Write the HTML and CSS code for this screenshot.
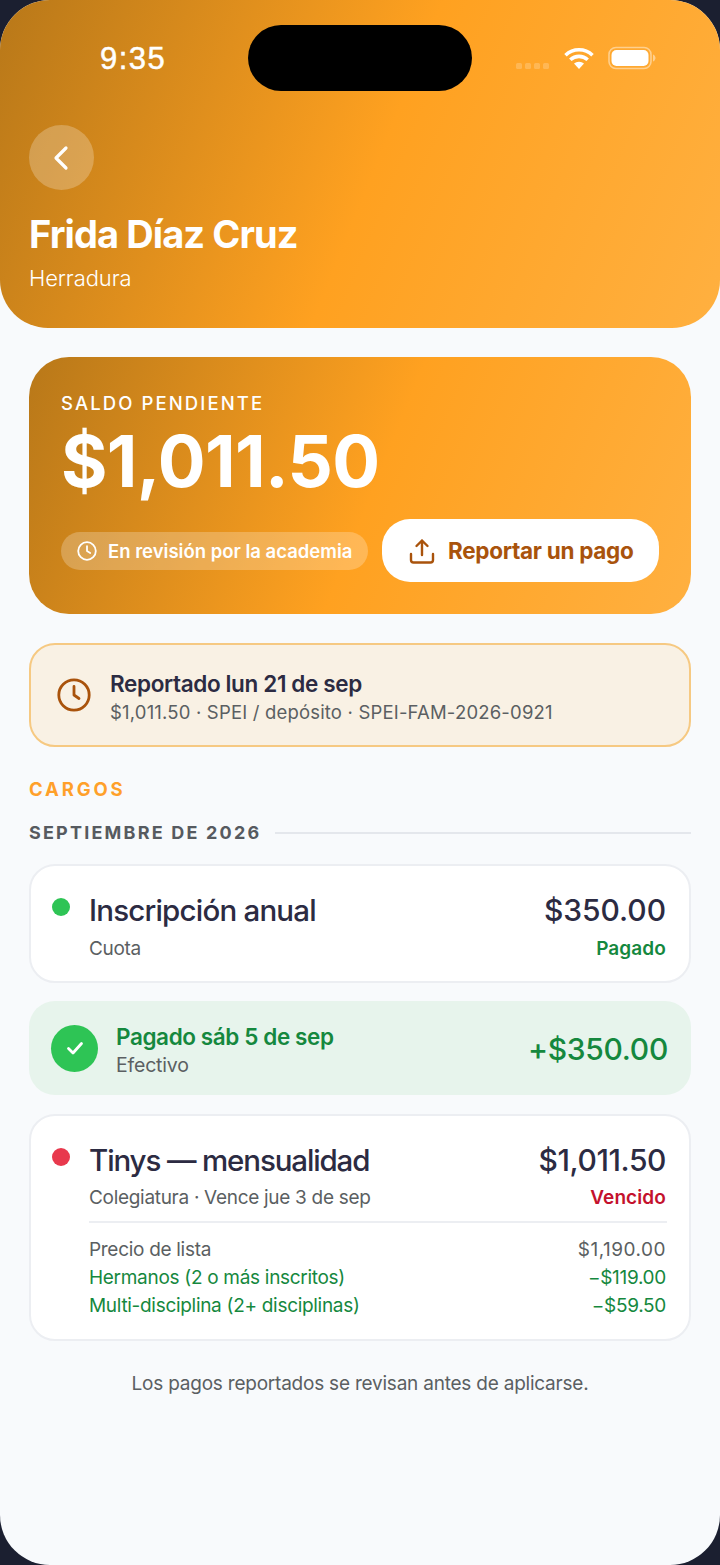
FILE: index.html
```html
<!DOCTYPE html>
<html lang="es">
<head>
<meta charset="utf-8">
<title>Frida Díaz Cruz</title>
<link rel="stylesheet" href="styles.css">
</head>
<body>
<div class="phone">
  <header class="hero">
    <div class="status">
      <span class="time">9:35</span>
      <div class="status-icons">
        <span class="signal"><i></i><i></i><i></i><i></i></span>
        <svg class="wifi" width="32" height="24" viewBox="0 0 32 24"><path d="M2.500 9.200a19.500 19.500 0 0 1 27 0M7.300 13.800a12.700 12.700 0 0 1 17.400 0" fill="none" stroke="#fff" stroke-width="3.600"/><path d="M11 17.600a7.400 7.400 0 0 1 10 0L16 23z" fill="#fff"/></svg>
        <svg class="battery" width="48" height="24" viewBox="0 0 48 24"><rect x="1" y="1.500" width="42" height="21" rx="7" fill="none" stroke="#fff" stroke-opacity=".45" stroke-width="1.600"/><rect x="3.500" y="4" width="37" height="16" rx="5" fill="#fff"/><path d="M45 8.500c1.600.6 2.500 2 2.500 3.500s-.9 2.900-2.500 3.500z" fill="#fff" fill-opacity=".45"/></svg>
      </div>
    </div>
    <div class="island"></div>
    <button class="back" aria-label="Volver">
      <svg width="28" height="28" viewBox="0 0 28 28"><path d="M18 4 8 14l10 10" fill="none" stroke="#fff" stroke-width="3.200" stroke-linecap="round" stroke-linejoin="round"/></svg>
    </button>
    <h1 class="name">Frida Díaz Cruz</h1>
    <p class="place">Herradura</p>
  </header>

  <main class="content">
    <section class="balance">
      <div class="balance-label">SALDO PENDIENTE</div>
      <div class="balance-amount">$1,011.50</div>
      <div class="balance-actions">
        <span class="pill">
          <svg width="22" height="22" viewBox="0 0 22 22"><circle cx="11" cy="11" r="8.800" fill="none" stroke="#fff" stroke-width="1.800"/><path d="M11 6.200V11l3.200 2" fill="none" stroke="#fff" stroke-width="1.800" stroke-linecap="round" stroke-linejoin="round"/></svg>
          En revisión por la academia
        </span>
        <button class="report-btn">
          <svg width="28" height="28" viewBox="0 0 28 28"><path d="M14 18V3.500M8.500 9 14 3.500 19.500 9M3 17v6a2.500 2.500 0 0 0 2.500 2.500h17A2.500 2.500 0 0 0 25 23v-6" fill="none" stroke="#a9530c" stroke-width="2.400" stroke-linecap="round" stroke-linejoin="round"/></svg>
          Reportar un pago
        </button>
      </div>
    </section>

    <section class="notice">
      <svg width="36" height="36" viewBox="0 0 36 36"><circle cx="18" cy="18" r="15.200" fill="none" stroke="#a9530c" stroke-width="2.800"/><path d="M18 9.500V18l5 3.500" fill="none" stroke="#a9530c" stroke-width="2.800" stroke-linecap="round" stroke-linejoin="round"/></svg>
      <div class="notice-text">
        <div class="notice-title">Reportado lun 21 de sep</div>
        <div class="notice-sub">$1,011.50 · SPEI / depósito · SPEI-FAM-2026-0921</div>
      </div>
    </section>

    <div class="section-title">CARGOS</div>
    <div class="month"><span>SEPTIEMBRE DE 2026</span><hr></div>

    <article class="charge">
      <span class="dot dot-green"></span>
      <div class="charge-body">
        <div class="row row-title"><span class="charge-name">Inscripción anual</span><span class="charge-amt">$350.00</span></div>
        <div class="row row-sub"><span class="muted">Cuota</span><span class="state-green">Pagado</span></div>
      </div>
    </article>

    <article class="paid">
      <span class="check">
        <svg width="24" height="24" viewBox="0 0 24 24"><path d="M5.500 12.500 10 17l8.500-9.500" fill="none" stroke="#fff" stroke-width="2.800" stroke-linecap="round" stroke-linejoin="round"/></svg>
      </span>
      <div class="paid-text">
        <div class="paid-title">Pagado sáb 5 de sep</div>
        <div class="paid-sub">Efectivo</div>
      </div>
      <span class="paid-amt">+$350.00</span>
    </article>

    <article class="charge charge-detail">
      <span class="dot dot-red"></span>
      <div class="charge-body">
        <div class="row row-title"><span class="charge-name">Tinys — mensualidad</span><span class="charge-amt">$1,011.50</span></div>
        <div class="row row-sub"><span class="muted">Colegiatura · Vence jue 3 de sep</span><span class="state-red">Vencido</span></div>
        <div class="breakdown">
          <div class="row line"><span>Precio de lista</span><span class="list-price">$1,190.00</span></div>
          <div class="row line line-green"><span>Hermanos (2 o más inscritos)</span><span>−$119.00</span></div>
          <div class="row line line-green"><span>Multi-disciplina (2+ disciplinas)</span><span>−$59.50</span></div>
        </div>
      </div>
    </article>

    <p class="foot">Los pagos reportados se revisan antes de aplicarse.</p>
  </main>
</div>
</body>
</html>
```
FILE: styles.css
```css
* { box-sizing: border-box; }
html, body { margin: 0; padding: 0; background: #1b1f30; }
body { width: 720px; height: 1565px; overflow: hidden; font-family: "Inter", "Noto Sans", sans-serif; color: #2b2b40; }
.phone { position: relative; width: 720px; height: 1565px; background: #f8fafc; border-radius: 50px; overflow: hidden; }

.hero { position: relative; height: 328px; padding: 125px 29px 0; border-radius: 0 0 48px 48px; background: linear-gradient(112deg, #b87819 0%, #ffa120 52%, #ffb040 100%); color: #fff; }
.status { position: absolute; left: 0; right: 0; top: 0; height: 116px; }
.time { position: absolute; left: 100px; top: 42px; font: 400 31px/34px "Liberation Sans", Arial, sans-serif; letter-spacing: 1.500px; -webkit-text-stroke: .5px #fff; color: #fff; }
.status-icons { position: absolute; left: 516px; top: 46px; display: flex; align-items: center; }
.signal { display: flex; gap: 3px; width: 47px; margin-top: 15px; }
.signal i { width: 6px; height: 6px; border-radius: 1.500px; background: rgba(255, 255, 255, .2); }
.wifi { margin-right: 13px; }
.island { position: absolute; left: 248px; top: 25px; width: 224px; height: 66px; border-radius: 33px; background: #000; }
.back { display: flex; align-items: center; justify-content: center; width: 65px; height: 65px; padding: 0; border: 0; border-radius: 50%; background: rgba(255, 255, 255, .24); }
.name { margin: 20px 0 0; font-size: 38px; line-height: 48px; font-weight: 700; letter-spacing: -.9px; }
.place { margin: 6px 0 0; font-size: 22px; line-height: 28px; font-weight: 300; letter-spacing: -.1px; }

.content { padding: 29px 29px 0; }
.balance { height: 257px; padding: 34px 32px 0; border-radius: 40px; background: linear-gradient(112deg, #b87819 0%, #ffa120 52%, #ffb040 100%); color: #fff; }
.balance-label { font-size: 18.500px; line-height: 24px; font-weight: 500; letter-spacing: 2.100px; }
.balance-amount { margin-top: 9px; font-size: 71px; line-height: 74px; font-weight: 700; letter-spacing: -.65px; }
.balance-actions { display: flex; align-items: center; gap: 14px; margin-top: 21px; }
.pill { display: flex; align-items: center; gap: 10px; width: 307px; height: 38px; padding-left: 15px; border-radius: 19px; background: rgba(255, 255, 255, .24); font-size: 18.500px; font-weight: 600; letter-spacing: 0; white-space: nowrap; }
.report-btn { display: flex; align-items: center; gap: 12px; width: 277px; height: 63px; padding: 0 0 0 26px; border: 0; border-radius: 28px; background: #fff; color: #a9530c; font-family: inherit; font-size: 22.500px; font-weight: 700; letter-spacing: -.3px; white-space: nowrap; }

.notice { display: flex; align-items: center; gap: 18px; height: 104px; margin-top: 29px; padding-left: 25px; border: 2px solid #f6c982; border-radius: 26px; background: #f9f1e4; }
.notice-text { padding-top: 5px; }
.notice-title { font-size: 22.500px; line-height: 28px; font-weight: 600; letter-spacing: -.36px; color: #2c2b42; }
.notice-sub { margin-top: 1px; font-size: 18.500px; line-height: 26px; font-weight: 400; letter-spacing: .18px; color: #5b5f62; }

.section-title { margin-top: 31px; font-size: 18.500px; line-height: 22px; font-weight: 700; letter-spacing: 2.850px; color: #ffa02a; }
.month { display: flex; align-items: center; gap: 14px; margin-top: 22px; }
.month span { font-size: 18px; line-height: 22px; font-weight: 700; letter-spacing: 2.200px; color: #565a60; white-space: nowrap; }
.month hr { flex: 1; height: 2px; margin: 0; border: 0; background: #e4e7ec; }

.charge { display: flex; gap: 19px; min-height: 119px; margin-top: 20px; padding: 23px 23px 0 21px; border: 2px solid #eceef2; border-radius: 26px; background: #fff; }
.charge-detail { min-height: 227px; margin-top: 19px; }
.dot { flex: none; width: 18px; height: 18px; margin-top: 9px; border-radius: 50%; }
.dot-green { background: #2ec455; }
.dot-red { background: #e8394d; }
.charge-body { flex: 1; min-width: 0; }
.row { display: flex; justify-content: space-between; white-space: nowrap; }
.row-title { line-height: 44px; height: 44px; margin-top: -1px; }
.charge-name { font-size: 29.500px; font-weight: 500; letter-spacing: -.8px; color: #2c2b42; }
.charge-amt { font-size: 30px; font-weight: 500; letter-spacing: -.05px; color: #2c2b42; }
.charge-detail .charge-name { letter-spacing: -1.130px; }
.charge-detail .charge-amt { letter-spacing: -.4px; }
.row-sub { height: 26px; margin-top: 4px; font-size: 19px; line-height: 26px; }
.charge-detail .row-sub { margin-top: 3px; }
.muted { color: #5b5f62; letter-spacing: -.3px; }
.state-green { font-weight: 600; color: #15883e; letter-spacing: .1px; }
.state-red { font-weight: 600; color: #c4112d; letter-spacing: .1px; }

.paid { display: flex; align-items: center; height: 94px; margin-top: 18px; padding: 0 23px 0 22px; border-radius: 26px; background: #e7f4ec; }
.check { display: flex; align-items: center; justify-content: center; width: 47px; height: 47px; border-radius: 50%; background: #2ec455; }
.paid-text { flex: 1; margin-left: 18px; padding-top: 6px; }
.paid-title { font-size: 22.500px; line-height: 28px; font-weight: 600; letter-spacing: -.4px; color: #15883e; }
.paid-sub { font-size: 19.500px; line-height: 28px; letter-spacing: -.2px; color: #5b5f62; }
.paid-amt { margin-top: 2px; font-size: 30px; font-weight: 500; letter-spacing: -.3px; color: #15883e; }

.breakdown { margin: 10px -1px 0 0; padding: 13px 1px 0 0; border-top: 2px solid #eceef2; }
.line { height: 28px; font-size: 19px; line-height: 28px; letter-spacing: -.3px; color: #5b5f62; }
.line-green { color: #15883e; }
.list-price { letter-spacing: .5px; }

.foot { margin: 29px 0 0; text-align: center; font-size: 19px; line-height: 28px; letter-spacing: -.22px; color: #5b5f62; }
```
